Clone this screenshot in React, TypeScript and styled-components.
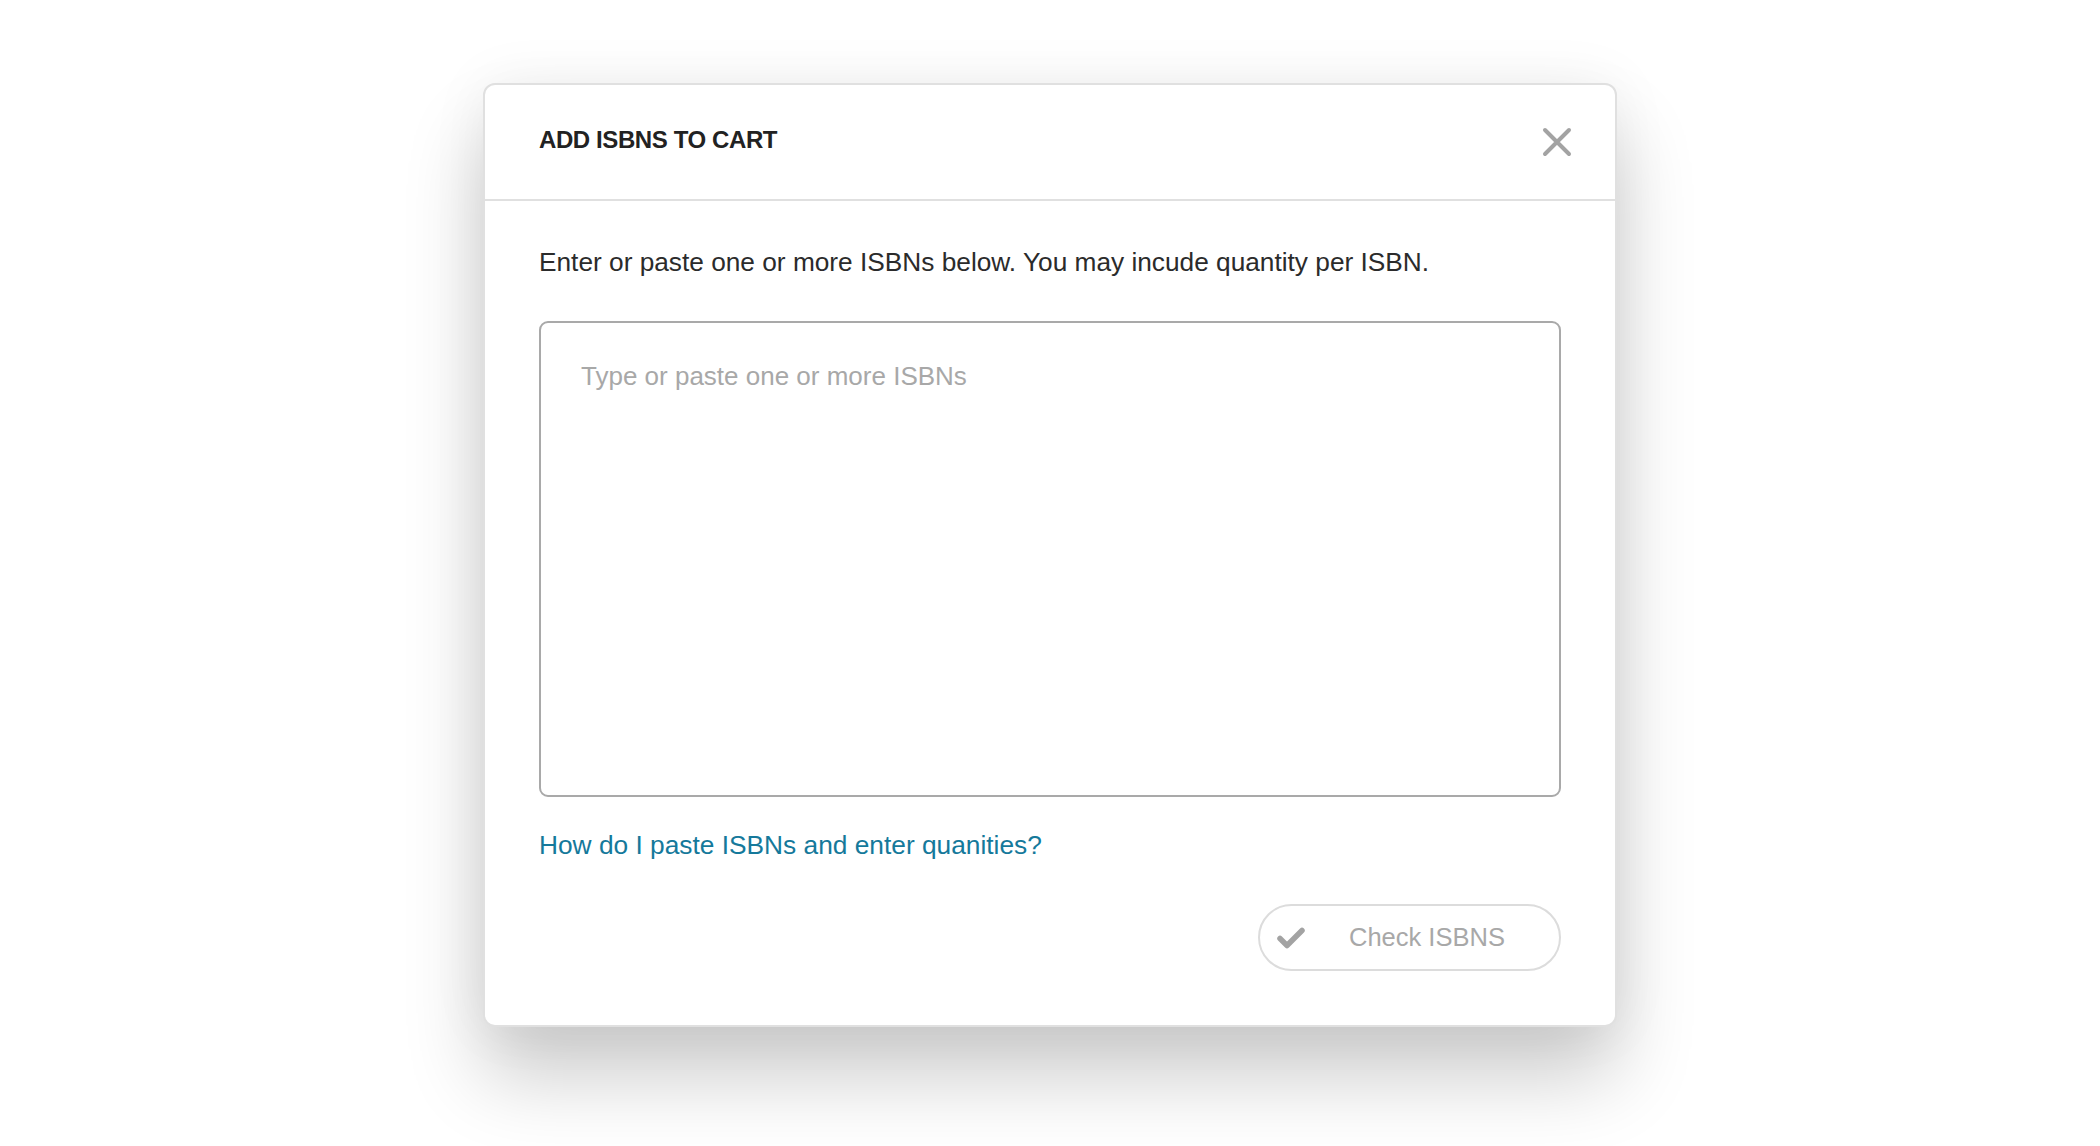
import styled, { createGlobalStyle } from "styled-components";

const GlobalStyle = createGlobalStyle`
  html, body {
    margin: 0;
    padding: 0;
    background: #ffffff;
    font-family: "Liberation Sans", Arial, sans-serif;
  }
  * {
    box-sizing: border-box;
  }
`;

const CloseIcon = () => (
  <svg width="30" height="30" viewBox="0 0 30 30" fill="none">
    <path d="M3 3 L27 27 M27 3 L3 27" stroke="#a3a3a3" strokeWidth="4" strokeLinecap="round" />
  </svg>
);

const CheckIcon = () => (
  <svg width="28" height="22" viewBox="0 0 28 22" fill="none">
    <polyline points="3,11.5 10,18.5 25,3.5" stroke="#a3a3a3" strokeWidth="5.5" strokeLinecap="round" strokeLinejoin="round" />
  </svg>
);

const App = () => {
  return (
    <>
      <GlobalStyle />
      <Page>
        <Modal>
          <Header>
            <Title>ADD ISBNS TO CART</Title>
            <CloseButton type="button" aria-label="Close">
              <CloseIcon />
            </CloseButton>
          </Header>
          <Body>
            <Description>
              Enter or paste one or more ISBNs below. You may incude quantity per ISBN.
            </Description>
            <IsbnInput placeholder="Type or paste one or more ISBNs" />
            <HelpLink href="#">How do I paste ISBNs and enter quanities?</HelpLink>
            <Footer>
              <CheckButton type="button" disabled>
                <CheckIcon />
                <span>Check ISBNS</span>
              </CheckButton>
            </Footer>
          </Body>
        </Modal>
      </Page>
    </>
  );
};

export default App;

const Page = styled.div`
  width: 100%;
  min-height: 1146px;
  display: flex;
  justify-content: center;
  align-items: flex-start;
  padding-top: 83px;
`;

const Modal = styled.div`
  width: 1134px;
  background: #ffffff;
  border: 2px solid #e0e0e0;
  border-radius: 12px;
  box-shadow: 0 50px 80px rgba(0, 0, 0, 0.2), 0 0 60px rgba(0, 0, 0, 0.06);
`;

const Header = styled.div`
  height: 116px;
  display: flex;
  align-items: center;
  justify-content: space-between;
  padding: 0 43px 0 54px;
  border-bottom: 2px solid #e0e0e0;
`;

const Title = styled.h2`
  margin: 0;
  font-size: 24px;
  font-weight: 700;
  letter-spacing: -0.4px;
  color: #222222;
  padding-bottom: 4px;
`;

const CloseButton = styled.button`
  width: 30px;
  height: 30px;
  padding: 0;
  border: none;
  background: none;
  display: flex;
  cursor: pointer;
`;

const Body = styled.div`
  padding: 46px 54px 54px;
  display: flex;
  flex-direction: column;
`;

const Description = styled.p`
  margin: 0;
  font-size: 26.25px;
  line-height: 30px;
  color: #2b2b2b;
`;

const IsbnInput = styled.textarea`
  margin-top: 44px;
  height: 476px;
  width: 100%;
  resize: none;
  border: 2px solid #a9a9a9;
  border-radius: 9px;
  padding: 38px 40px;
  font-family: "Liberation Sans", Arial, sans-serif;
  font-size: 26px;
  line-height: 30px;
  color: #2b2b2b;
  outline: none;

  &::placeholder {
    color: #a8a8a8;
  }
`;

const HelpLink = styled.a`
  margin-top: 33px;
  align-self: flex-start;
  font-size: 26.3px;
  line-height: 30px;
  color: #15799b;
  text-decoration: none;
`;

const Footer = styled.div`
  margin-top: 44px;
  display: flex;
  justify-content: flex-end;
`;

const CheckButton = styled.button`
  width: 303px;
  height: 67px;
  border: 2px solid #dcdcdc;
  border-radius: 34px;
  background: #ffffff;
  display: flex;
  align-items: center;
  padding: 0 0 0 17px;
  cursor: default;

  > span {
    margin-left: 44px;
    font-family: "Liberation Sans", Arial, sans-serif;
    font-size: 25.5px;
    color: #a8a8a8;
  }
`;
